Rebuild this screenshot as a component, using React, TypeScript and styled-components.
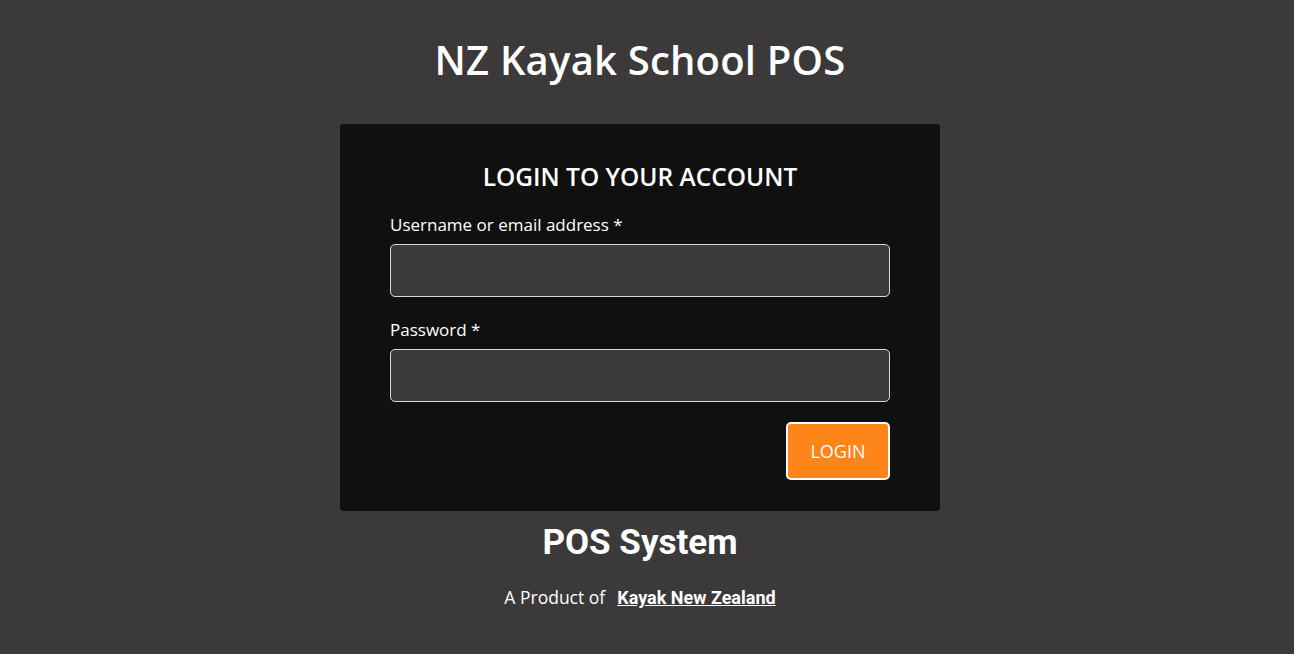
import React from "react";
import styled, { createGlobalStyle } from "styled-components";

const GlobalStyle = createGlobalStyle`
  html, body {
    margin: 0;
    padding: 0;
    background: #3b393a;
    font-family: "Open Sans", "Noto Sans", sans-serif;
    color: #fff;
  }
`;

const Page = styled.div`
  min-height: 654px;
  padding-right: 14px;
  display: flex;
  flex-direction: column;
  align-items: center;
`;

const Title = styled.h1`
  margin: 34px 0 0;
  font-size: 40px;
  line-height: 52px;
  font-weight: 600;
  letter-spacing: 0.2px;
`;

const Card = styled.form`
  box-sizing: border-box;
  width: 600px;
  margin-top: 38px;
  padding: 30px 50px 31px;
  background: #101010;
  border-radius: 4px;
  display: flex;
  flex-direction: column;
`;

const CardHeading = styled.h2`
  margin: 8px 0 22px;
  text-align: center;
  font-size: 24.5px;
  line-height: 30px;
  font-weight: 600;
`;

const Field = styled.div`
  display: flex;
  flex-direction: column;
  gap: 8px;
  margin-bottom: 22px;
`;

const Label = styled.label`
  font-size: 17px;
  line-height: 22px;
`;

const Input = styled.input`
  box-sizing: border-box;
  height: 53px;
  width: 100%;
  background: #3b393a;
  border: 1px solid #d8d8d8;
  border-radius: 5px;
  color: #fff;
  font-size: 16px;
  padding: 0 12px;
  outline: none;
`;

const Actions = styled.div`
  margin-top: -2px;
  display: flex;
  justify-content: flex-end;
`;

const LoginButton = styled.button`
  width: 104px;
  height: 58px;
  background: #fd8419;
  border: 2px solid #fff;
  border-radius: 5px;
  color: #fff;
  font-family: "Open Sans", sans-serif;
  font-size: 18px;
  cursor: pointer;
`;

const SubTitle = styled.h2`
  margin: 10px 0 0;
  font-family: Roboto, sans-serif;
  font-size: 35px;
  line-height: 44px;
  font-weight: 700;
`;

const Footer = styled.p`
  margin: 20px 0 0;
  font-size: 17.5px;
  line-height: 24px;
`;

const FooterLink = styled.a`
  margin-left: 12px;
  font-family: Roboto, sans-serif;
  font-weight: 700;
  font-size: 18px;
  color: #fff;
  text-decoration: underline;
`;

export default function App() {
  return (
    <>
      <GlobalStyle />
      <Page>
        <Title>NZ Kayak School POS</Title>
        <Card onSubmit={(e) => e.preventDefault()}>
          <CardHeading>LOGIN TO YOUR ACCOUNT</CardHeading>
          <Field>
            <Label htmlFor="username">Username or email address *</Label>
            <Input id="username" type="text" />
          </Field>
          <Field>
            <Label htmlFor="password">Password *</Label>
            <Input id="password" type="password" />
          </Field>
          <Actions>
            <LoginButton type="submit">LOGIN</LoginButton>
          </Actions>
        </Card>
        <SubTitle>POS System</SubTitle>
        <Footer>
          A Product of
          <FooterLink href="#">Kayak New Zealand</FooterLink>
        </Footer>
      </Page>
    </>
  );
}
